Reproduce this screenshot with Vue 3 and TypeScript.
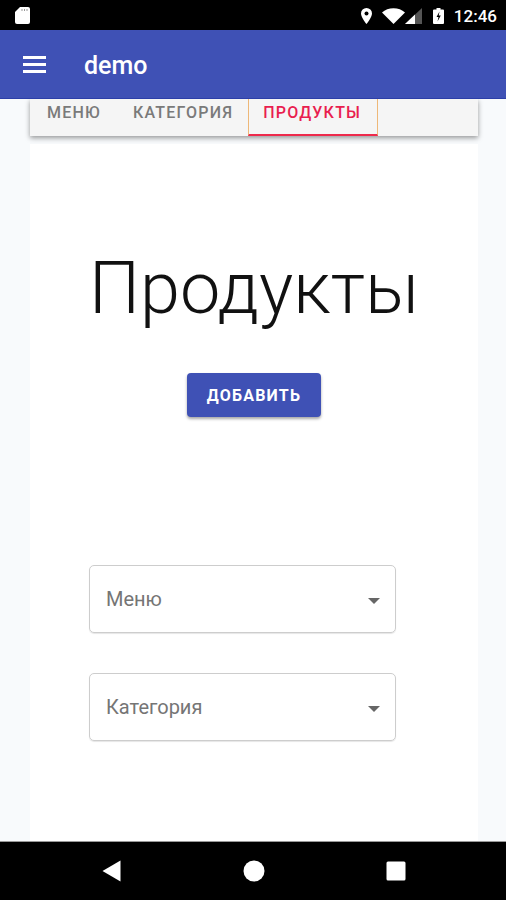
<template>
  <div class="screen">
    <div class="status-bar">
      <svg class="sd-icon" width="15" height="17" viewBox="0 0 15 17">
        <path d="M5 0H13a2 2 0 0 1 2 2v13a2 2 0 0 1-2 2H2a2 2 0 0 1-2-2V5z" fill="#fff" />
        <path d="M6.500 2h1v2h-1zM9 2h1v2H9zM11.500 2h1v2h-1z" fill="#999" />
      </svg>
      <div class="status-right">
        <svg width="11" height="16" viewBox="0 0 11 16">
          <path d="M5.500 0a5.500 5.500 0 0 0-5.500 5.500c0 3.900 5.500 10.500 5.500 10.500s5.500-6.600 5.500-10.500a5.500 5.500 0 0 0-5.500-5.500z" fill="#fff" />
          <circle cx="5.500" cy="5.500" r="2" fill="#000" />
        </svg>
        <svg class="wifi" width="23" height="16" viewBox="0 0 23 16">
          <path d="M0 4.500C3 1.800 7 0.300 11.500 0.300S20 1.800 23 4.500L11.500 16z" fill="#fff" />
        </svg>
        <svg class="signal" width="17" height="16" viewBox="0 0 17 16">
          <path d="M17 0V16H0z" fill="#555" />
          <path d="M10 6.500V16H0z" fill="#fff" />
        </svg>
        <svg class="battery" width="11" height="16" viewBox="0 0 11 16">
          <path d="M3.500 0h4v1.500H10a1 1 0 0 1 1 1V15a1 1 0 0 1-1 1H1a1 1 0 0 1-1-1V2.500a1 1 0 0 1 1-1h2.500z" fill="#fff" />
          <path d="M6.500 3.500 3.500 9h2L4.500 13.500 7.800 7.500H5.700z" fill="#000" />
        </svg>
        <span class="clock">12:46</span>
      </div>
    </div>

    <header class="app-bar">
      <svg class="menu-icon" width="23" height="17" viewBox="0 0 23 17">
        <path d="M0 0h23v3H0zM0 7h23v3H0zM0 14h23v3H0z" fill="#fff" />
      </svg>
      <span class="app-title">demo</span>
    </header>

    <main class="content">
      <nav class="tabs">
        <a
          v-for="tab in tabs"
          :key="tab"
          class="tab"
          :class="{ active: tab === activeTab }"
        >{{ tab }}</a>
      </nav>

      <section class="panel">
        <h1>Продукты</h1>
        <button class="add-btn">ДОБАВИТЬ</button>
        <div class="fields">
          <div v-for="field in fields" :key="field" class="select">
            <span>{{ field }}</span>
            <i class="caret"></i>
          </div>
        </div>
      </section>
    </main>

    <footer class="nav-bar">
      <svg width="19" height="22" viewBox="0 0 19 22"><path d="M18.500 0.500v21L0.500 11z" fill="#fff" /></svg>
      <svg width="22" height="22" viewBox="0 0 22 22"><circle cx="11" cy="11" r="10.500" fill="#fff" /></svg>
      <svg width="20" height="20" viewBox="0 0 20 20"><rect x="0.500" y="0.500" width="19" height="19" rx="1.500" fill="#fff" /></svg>
    </footer>
  </div>
</template>

<script setup lang="ts">
const tabs = ['МЕНЮ', 'КАТЕГОРИЯ', 'ПРОДУКТЫ']
const activeTab = 'ПРОДУКТЫ'
const fields = ['Меню', 'Категория']
</script>

<style>
html,
body {
  margin: 0;
  overflow: hidden;
}
</style>

<style scoped>
.screen {
  width: 506px;
  height: 900px;
  display: flex;
  flex-direction: column;
  background: #f8fafc;
  font-family: Roboto, "Noto Sans", sans-serif;
  overflow: hidden;
}
.status-bar {
  height: 30px;
  flex: none;
  background: #000;
  display: flex;
  align-items: center;
  justify-content: space-between;
  padding: 1px 9px 0 15px;
  box-sizing: border-box;
}
.status-right {
  display: flex;
  align-items: center;
}
.wifi {
  margin-left: 10px;
}
.battery {
  margin-left: 11px;
}
.clock {
  margin-left: 10px;
  color: #fff;
  font-size: 17px;
  font-weight: 500;
}
.app-bar {
  height: 69px;
  flex: none;
  box-sizing: border-box;
  background: #3f51b5;
  border-bottom: 1px solid #2c3fa8;
  display: flex;
  align-items: center;
  padding-left: 23px;
  position: relative;
  z-index: 2;
}
.app-title {
  margin-left: 38px;
  padding-top: 2px;
  color: #fff;
  font-size: 25px;
  font-weight: 500;
}
.content {
  flex: 1;
  min-height: 0;
  padding: 0 28px 0 30px;
  display: flex;
  flex-direction: column;
}
.tabs {
  height: 37px;
  flex: none;
  display: flex;
  background: #f5f5f5;
  box-shadow: 0 2px 5px rgba(0, 0, 0, 0.4);
}
.tab {
  box-sizing: border-box;
  padding: 0 15px 10px 17px;
  display: flex;
  align-items: center;
  color: #7a7a7a;
  font-size: 16px;
  font-weight: 500;
  letter-spacing: 1.2px;
}
.tab.active {
  color: #e91e4f;
  padding: 0 16px 8px 14px;
  border-left: 1px solid #eeb878;
  border-right: 1px solid #eeb878;
  border-bottom: 2px solid #ee2a4c;
}
.panel {
  flex: 1;
  margin-top: 8px;
  background: #fff;
  display: flex;
  flex-direction: column;
  align-items: center;
}
h1 {
  margin: 101px 0 0;
  color: #111;
  font-size: 72px;
  font-weight: 300;
  line-height: 88px;
}
.add-btn {
  margin-top: 40px;
  width: 134px;
  height: 44px;
  border: none;
  border-radius: 4px;
  background: #3f51b5;
  color: #fff;
  font-family: inherit;
  font-size: 16px;
  font-weight: 700;
  letter-spacing: 1.2px;
  box-shadow: 0 2px 3px rgba(0, 0, 0, 0.35);
}
.fields {
  margin-top: 148px;
  display: flex;
  flex-direction: column;
  gap: 40px;
  align-self: flex-start;
  margin-left: 59px;
}
.select {
  width: 307px;
  height: 68px;
  box-sizing: border-box;
  border: 1px solid #cdcdcd;
  border-radius: 5px;
  box-shadow: 0 1px 1px rgba(0, 0, 0, 0.1);
  padding: 0 15px 0 16px;
  display: flex;
  align-items: center;
  justify-content: space-between;
  color: #757575;
  font-size: 20px;
}
.caret {
  width: 0;
  height: 0;
  margin-top: 3px;
  border-left: 6px solid transparent;
  border-right: 6px solid transparent;
  border-top: 6px solid #666;
}
.nav-bar {
  height: 58px;
  flex: none;
  background: #000;
  border-top: 1px solid #999;
  display: flex;
  align-items: center;
  padding-left: 102px;
}
.nav-bar svg:nth-child(2) {
  margin-left: 122px;
}
.nav-bar svg:nth-child(3) {
  margin-left: 121px;
}
</style>
